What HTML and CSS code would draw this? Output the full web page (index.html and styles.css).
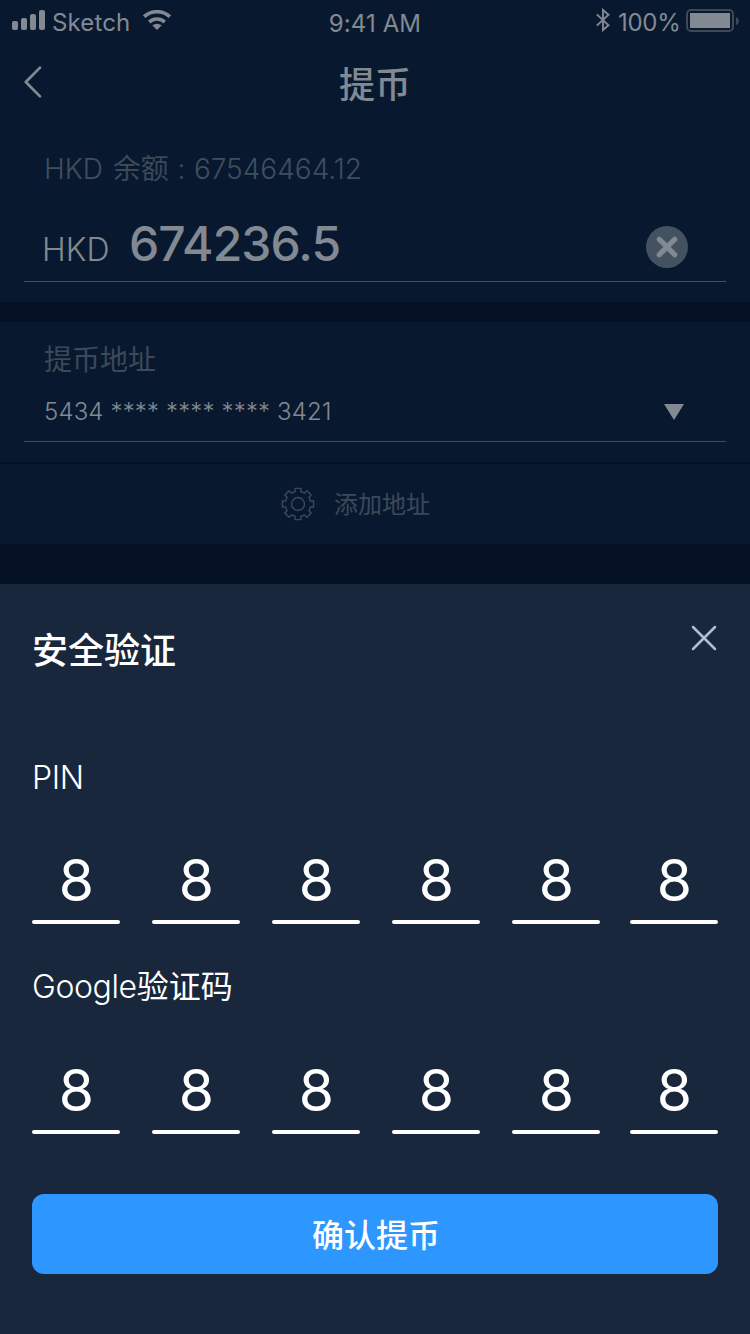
FILE: index.html
```html
<!DOCTYPE html>
<html lang="zh-CN">
<head>
<meta charset="utf-8">
<title>提币</title>
<link rel="stylesheet" href="styles.css">
</head>
<body>
<div class="screen">
  <div class="status">
    <div class="status-left">
      <svg class="signal" width="33" height="20" viewBox="0 0 33 20" fill="currentColor"><rect y="11" width="6" height="9" rx="2"/><rect x="9" y="8" width="6" height="12" rx="2"/><rect x="18" y="4" width="6" height="16" rx="2"/><rect x="27" width="6" height="20" rx="2"/></svg>
      <span class="carrier">Sketch</span>
      <svg class="wifi" width="28" height="20" viewBox="0 0 28 20"><g fill="none" stroke="currentColor" stroke-width="3.7"><path d="M1.2 6.7C8.4 .1 19.6 .1 26.8 6.7"/><path d="M6.2 12C10.7 8 17.3 8 21.8 12"/></g><path d="M14 20 9.3 15.3Q14 12 18.7 15.3Z" fill="currentColor"/></svg>
    </div>
    <div class="clock">9:41 AM</div>
    <div class="status-right">
      <svg class="bluetooth" width="14" height="24" viewBox="0 0 14 24" fill="none" stroke="currentColor" stroke-width="1.9"><path d="M.8 6.4 12.5 17.2 7 22V2L12.5 6.8.8 17.6"/></svg>
      <span class="percent">100%</span>
      <svg class="battery" width="53" height="23" viewBox="0 0 53 23"><rect x="1" y="1" width="46" height="21" rx="4" fill="none" stroke="#3e4857" stroke-width="2"/><rect x="4" y="4" width="40" height="15" fill="currentColor"/><path d="M50 8Q52.8 9 52.8 12T50 16Z" fill="#3e4857"/></svg>
    </div>
  </div>
  <div class="nav">
    <svg class="back" width="18" height="32" viewBox="0 0 18 32" fill="none" stroke="currentColor" stroke-width="2.7" stroke-linecap="round" stroke-linejoin="round"><path d="M16 1.6 1.8 16 16 30.4"/></svg>
    <h1 class="nav-title">提币</h1>
  </div>
  <div class="section amount">
    <div class="balance"><span class="balance-label">HKD <span class="cjk">余额</span></span><span class="colon">:</span><span class="balance-value">67546464.12</span></div>
    <div class="amount-row">
      <span class="currency">HKD</span><span class="value">674236.5</span>
      <svg class="clear" width="42" height="42" viewBox="0 0 42 42"><circle cx="21" cy="21" r="21" fill="#435161"/><path d="m13.3 13.3 15.4 15.4m0-15.4L13.3 28.7" stroke="currentColor" stroke-width="5.2" stroke-linecap="round"/></svg>
    </div>
  </div>
  <div class="section address">
    <div class="address-label">提币地址</div>
    <div class="address-row"><span class="address-value">5434 **** **** **** 3421</span><svg width="20" height="16" viewBox="0 0 20 16"><path d="M0 0h20L10 16Z" fill="currentColor"/></svg></div>
  </div>
  <div class="add">
    <svg width="34" height="34" viewBox="-17 -17 34 34" fill="none" stroke="currentColor" stroke-width="1.4" stroke-linejoin="round"><circle r="6.5"/><path d="M-3 -15.6H3V-12.3Q5 -11.8 6.6 -10.9L9 -13.2 13.2 -9 10.9 -6.6Q11.8 -5 12.3 -3H15.6V3H12.3Q11.8 5 10.9 6.6L13.2 9 9 13.2 6.6 10.9Q5 11.8 3 12.3V15.6H-3V12.3Q-5 11.8 -6.6 10.9L-9 13.2 -13.2 9 -10.9 6.6Q-11.8 5 -12.3 3H-15.6V-3H-12.3Q-11.8 -5 -10.9 -6.6L-13.2 -9 -9 -13.2 -6.6 -10.9Q-5 -11.8 -3 -12.3Z"/></svg>
    <span class="add-text">添加地址</span>
  </div>
  <div class="sheet">
    <div class="sheet-head">
      <h2 class="sheet-title">安全验证</h2>
      <svg class="close" width="26" height="26" viewBox="0 0 26 26" fill="none" stroke="currentColor" stroke-width="2.5" stroke-linecap="round"><path d="m2 2 22 22m0-22L2 24"/></svg>
    </div>
    <div class="label">PIN</div>
    <div class="code"><span>8</span><span>8</span><span>8</span><span>8</span><span>8</span><span>8</span></div>
    <div class="label label-google">Google<span class="cjk">验证码</span></div>
    <div class="code"><span>8</span><span>8</span><span>8</span><span>8</span><span>8</span><span>8</span></div>
    <button class="confirm">确认提币</button>
  </div>
</div>
</body>
</html>
```
FILE: styles.css
```css
* { box-sizing: border-box; }
body { margin: 0; background: #041124; }
.screen {
  width: 750px; height: 1334px; overflow: hidden;
  display: flex; flex-direction: column;
  background: #041124; color: #838992;
  font-family: Inter, "Noto Sans CJK SC", sans-serif;
  white-space: nowrap;
}
svg { display: block; flex: none; }
h1, h2 { margin: 0; }
.cjk { font-weight: 400; }

.status {
  height: 45px; flex: none; background: #08192f;
  display: grid; grid-template-columns: 1fr auto 1fr;
  font-size: 24px; line-height: 45px;
}
.status-left, .status-right { display: flex; }
.status-right { justify-content: flex-end; padding-right: 11px; }
.signal { margin: 10px 7px 0 12px; }
.carrier { letter-spacing: .15px; width: 78px; }
.wifi { margin: 10px 0 0 13px; }
.clock { padding-top: 1px; letter-spacing: .1px; }
.bluetooth { margin: 8px 8px 0 0; }
.percent { width: 62px; letter-spacing: -.3px; }
.battery { margin: 9px 0 0 6px; }

.nav {
  height: 74px; flex: none; background: #08192f; border-bottom: 1px solid #061529;
  display: grid; grid-template-columns: 1fr auto 1fr;
}
.back { margin: 21px 0 0 24px; }
.nav-title { font-size: 36px; font-weight: 500; line-height: 80px; height: 73px; }

.section { flex: none; background: #08192f; padding: 0 24px 20px; }
.amount { height: 183px; }
.balance {
  display: flex; height: 97px; padding: 0 20px;
  font-size: 28px; line-height: 100px; font-weight: 300; color: #404e5e;
}
.balance-label { word-spacing: 2px; }
.balance .cjk { color: #3b4959; }
.colon { width: 25px; text-align: center; }
.amount-row {
  display: flex; height: 66px; padding: 0 38px 0 18px;
  border-bottom: 1px solid #435161;
}
.currency { width: 87px; font-size: 32px; font-weight: 300; line-height: 67px; }
.value { font-size: 48px; font-weight: 500; line-height: 55px; letter-spacing: -.9px; }
.clear { margin: 10px 0 0 auto; }

.address { height: 140px; margin-top: 20px; }
.address-label { height: 72px; padding-left: 20px; font-size: 28px; line-height: 76px; color: #3b4959; }
.address-row {
  display: flex; align-items: center; justify-content: space-between;
  height: 48px; padding: 0 42px 12px 20px; border-bottom: 1px solid #3b4b5a;
  font-size: 24px; line-height: 35px; font-weight: 300;
}
.address-value { letter-spacing: .15px; }
.add {
  height: 80px; flex: none; margin-top: 2px; background: #08192f; color: #3b4959;
  display: flex; align-items: center; padding-left: 281px; gap: 19px;
  font-size: 24px;
}
.add-text { line-height: 34px; padding-top: 1px; }

.sheet { height: 750px; flex: none; margin-top: 40px; padding: 0 32px; background: #19273d; color: #fff; }
.sheet-head { display: flex; justify-content: space-between; height: 132px; }
.sheet-title { font-size: 36px; font-weight: 500; line-height: 134px; }
.close { margin: 41px 1px 0 0; color: #abbfd9; }
.label { height: 122px; font-size: 32px; font-weight: 300; line-height: 123px; letter-spacing: -.4px; }
.label .cjk { letter-spacing: 0; }
.code { display: flex; gap: 32px; height: 86px; }
.code span {
  position: relative; width: 88px; height: 86px; flex: none; text-align: center;
  font-size: 57px; line-height: 86px; font-weight: 400; padding-left: 1px;
}
.code span::after {
  content: ""; position: absolute; left: 0; right: 0; bottom: 0;
  height: 4px; border-radius: 2px; background: #fff;
}
.code span:last-child { margin-left: -2px; }
.label-google { height: 124px; line-height: 126px; }
.confirm {
  display: block; width: 686px; height: 80px; margin: 60px 0 0; padding: 3px 0 0 2px;
  border: 0; border-radius: 12px; background: #2d96ff; color: #fff;
  font: 500 32px/77px Inter, "Noto Sans CJK SC", sans-serif;
}
```
